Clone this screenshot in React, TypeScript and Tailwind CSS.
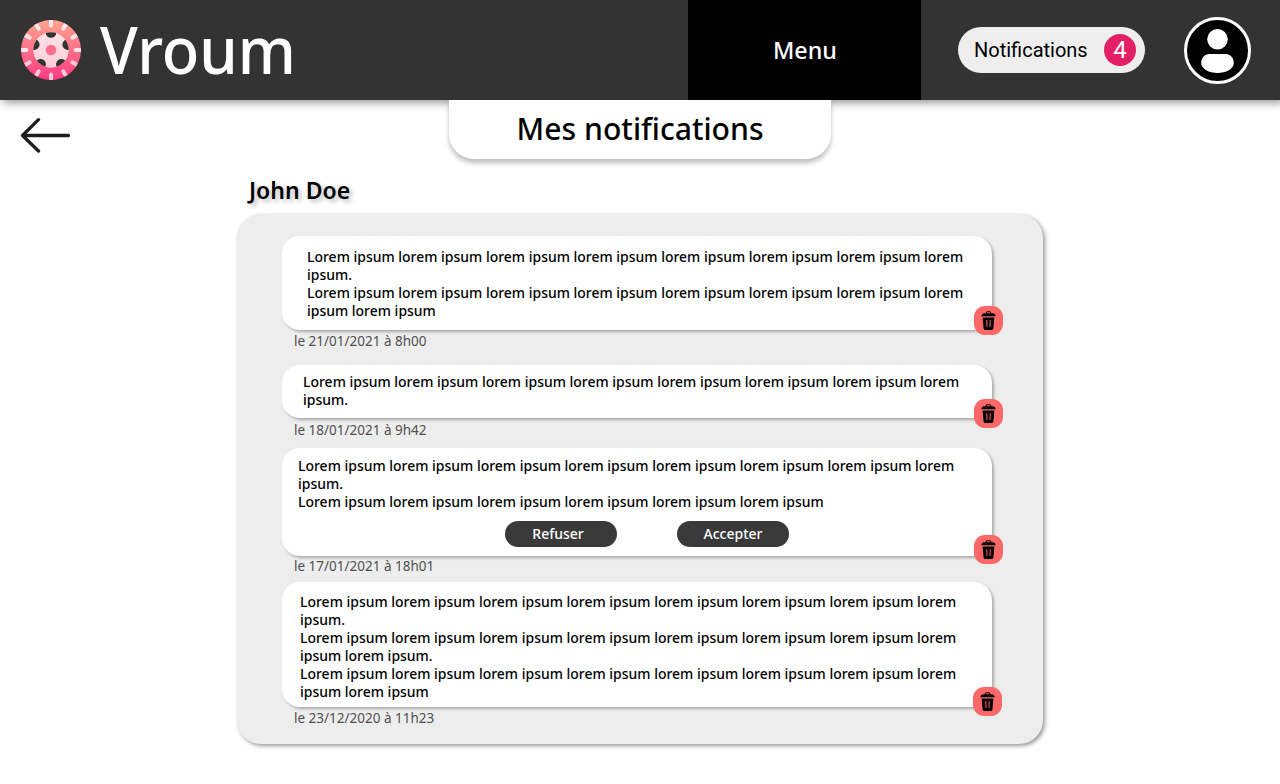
import React from "react";

type Note = {
  lines: string[];
  date: string;
  card: string;
  footer: string;
  trash: string;
  actions?: boolean;
};

const long =
  "Lorem ipsum lorem ipsum lorem ipsum lorem ipsum lorem ipsum lorem ipsum lorem ipsum lorem";

const notes: Note[] = [
  {
    lines: [long, "ipsum.", long, "ipsum lorem ipsum"],
    date: "le 21/01/2021 à 8h00",
    card: "h-[94px] pt-3 pl-[25px]",
    footer: "h-[35px] pt-[2px]",
    trash: "-right-[11px] -bottom-[5px]",
  },
  {
    lines: [long, "ipsum."],
    date: "le 18/01/2021 à 9h42",
    card: "h-[53px] pt-2 pl-[21px]",
    footer: "h-[30px] pt-[3px]",
    trash: "-right-[11px] -bottom-[10px]",
  },
  {
    lines: [long, "ipsum.", "Lorem ipsum lorem ipsum lorem ipsum lorem ipsum lorem ipsum lorem ipsum"],
    date: "le 17/01/2021 à 18h01",
    card: "h-[108px] pt-[9px] pl-4",
    footer: "h-[26px] pt-px",
    trash: "-right-[11px] -bottom-2",
    actions: true,
  },
  {
    lines: [long, "ipsum.", long, "ipsum lorem ipsum.", long, "ipsum lorem ipsum"],
    date: "le 23/12/2020 à 11h23",
    card: "h-[125px] pt-[11px] pl-[18px]",
    footer: "h-[30px] pt-[2px]",
    trash: "-right-[10px] -bottom-[9px]",
  },
];

function Wheel() {
  const spokes = Array.from({ length: 12 }, (_, i) => i * 30);
  const holes = Array.from({ length: 5 }, (_, i) => i * 72);
  return (
    <svg className="size-[60px] shrink-0" viewBox="0 0 60 60">
      <defs>
        <linearGradient id="tire" x1="0" y1="0" x2="0" y2="1">
          <stop offset="0" stopColor="#ffa68d" />
          <stop offset="1" stopColor="#fd3a84" />
        </linearGradient>
        <linearGradient id="rim" gradientUnits="userSpaceOnUse" x1="0" y1="0" x2="0" y2="60">
          <stop offset="0" stopColor="#ffe9ee" />
          <stop offset="1" stopColor="#ffc6d2" />
        </linearGradient>
        <clipPath id="tireClip">
          <circle cx="30" cy="30" r="30" />
        </clipPath>
        <clipPath id="rimClip">
          <circle cx="30" cy="30" r="17.7" />
        </clipPath>
      </defs>
      <circle cx="30" cy="30" r="30" fill="url(#tire)" />
      <g clipPath="url(#tireClip)">
        {spokes.map((a) => (
          <path
            key={a}
            d="M28 -1h4v6.400a2 2 0 0 1-4 0z"
            fill={a > 90 && a < 270 ? "#ffc9d5" : "#ffe4e9"}
            transform={`rotate(${a} 30 30)`}
          />
        ))}
      </g>
      <circle cx="30" cy="30" r="17.7" fill="url(#rim)" />
      <g clipPath="url(#rimClip)">
        {holes.map((a) => (
          <circle key={a} cx="30" cy="12.4" r="5.3" fill="#333" transform={`rotate(${a} 30 30)`} />
        ))}
      </g>
      <circle cx="30" cy="30" r="5.3" fill="#ff6f8d" />
    </svg>
  );
}

function TrashButton({ place }: { place: string }) {
  return (
    <button className={`absolute flex size-[29px] items-center justify-center rounded-[11px] bg-[#ff6868] ${place}`}>
      <svg className="h-[19px] w-[15px]" viewBox="0 0 15 19">
        <path d="M5 2.4Q5.2.7 6.4.7h2.2Q9.8.7 10 2.4" fill="none" stroke="#000" strokeWidth="1.1" />
        <path d="M3 2.2h9q1.6 0 2.3 1.7l.5 1.4H.2l.5-1.4Q1.4 2.2 3 2.2z" />
        <path d="M1.6 6.6h11.8l-1 11q-.1 1.4-1.4 1.4H4q-1.3 0-1.4-1.4z" />
        <path d="M5.8 9l.2 7M9.2 9L9 16" stroke="#ff6868" strokeWidth="1" />
      </svg>
    </button>
  );
}

function Notification({ note }: { note: Note }) {
  return (
    <>
      <article
        className={`relative rounded-[18px] bg-white shadow-[2px_2px_3px_rgba(0,0,0,0.28)] ${note.card}`}
      >
        {note.lines.map((line, i) => (
          <p
            key={i}
            className="h-[18px] origin-left scale-x-[0.963] text-[14.5px] leading-[16px] font-medium whitespace-nowrap text-black"
          >
            {line}
          </p>
        ))}
        {note.actions && (
          <div className="mt-[10px] ml-[207px] flex gap-[60px]">
            <button className="h-[26px] w-[112px] rounded-full bg-[#393939] pr-[6px] text-[14px] leading-[26px] font-medium text-white">
              Refuser
            </button>
            <button className="h-[26px] w-[112px] rounded-full bg-[#393939] text-[14px] leading-[26px] font-medium text-white">
              Accepter
            </button>
          </div>
        )}
        <TrashButton place={note.trash} />
      </article>
      <div
        className={`pl-3 text-[13.5px] leading-[18px] text-[#505050] ${note.footer}`}
      >
        {note.date}
      </div>
    </>
  );
}

export default function App() {
  return (
    <div className="h-[784px] w-[1280px] overflow-hidden bg-white font-['Noto_Sans',sans-serif] text-black">
      <header className="flex h-[100px] items-center bg-[#333] pl-[21px] shadow-[3px_3px_8px_rgba(0,0,0,0.4)]">
        <Wheel />
        <h1 className="mb-[5px] ml-[19px] w-[588px] origin-left scale-x-[0.93] text-[66px] leading-[94px] font-medium text-white">
          Vroum
        </h1>
        <nav className="flex h-full w-[233px] shrink-0 items-center justify-center bg-black text-[24px] font-medium text-white">
          <span className="scale-x-[0.97]">Menu</span>
        </nav>
        <button className="ml-[37px] flex h-[46px] w-[187px] shrink-0 items-center justify-between rounded-full bg-[#eee] pr-[9px] pl-4 font-['Roboto',sans-serif]">
          <span className="-mt-px text-[20px]">Notifications</span>
          <span className="flex size-8 items-center justify-center rounded-full bg-[#e31f66] text-[24px] text-white">
            4
          </span>
        </button>
        <div className="ml-[39px] size-[67px] shrink-0 overflow-hidden rounded-full border-[3px] border-white bg-black">
          <svg className="size-[61px]" viewBox="0 0 61 61">
            <circle cx="30.5" cy="19.2" r="10.3" fill="#fff" />
            <path
              d="M22.5 34h16c5 0 8.3 4 8.3 9 0 6-8 10-16.3 10S14.2 49 14.2 43c0-5 3.3-9 8.3-9z"
              fill="#fff"
            />
          </svg>
        </div>
      </header>

      <main>
        <div className="flex h-[76px] items-start">
          <button className="mt-[17px] ml-[20px] h-9 w-[51px]">
            <svg className="h-9 w-[51px]" viewBox="0 0 51 36">
              <path
                d="M48.5 18.5H2.5M18.5 2.7l-16 15.800 16 15.500"
                fill="none"
                stroke="#1d1f1d"
                strokeWidth="3.3"
                strokeLinecap="round"
                strokeLinejoin="round"
              />
            </svg>
          </button>
          <h2 className="ml-[378px] h-[59px] w-[382px] rounded-b-[25px] bg-white text-center text-[31.5px] leading-[55px] font-medium shadow-[0_4px_5px_rgba(0,0,0,0.25)]">
            <span className="-mx-4 inline-block scale-x-[0.957]">Mes notifications</span>
          </h2>
        </div>

        <h3 className="ml-[249px] h-[38px] text-[23px] leading-[28px] font-semibold [text-shadow:3px_3px_4px_rgba(0,0,0,0.25)]">
          John Doe
        </h3>
        <section className="ml-[237px] h-[530px] w-[806px] rounded-[24px] bg-[#ededed] pt-[22px] pr-[51px] pl-[45px] shadow-[2px_2px_4px_rgba(0,0,0,0.4)]">
          {notes.map((note) => (
            <Notification key={note.date} note={note} />
          ))}
        </section>
      </main>
    </div>
  );
}
